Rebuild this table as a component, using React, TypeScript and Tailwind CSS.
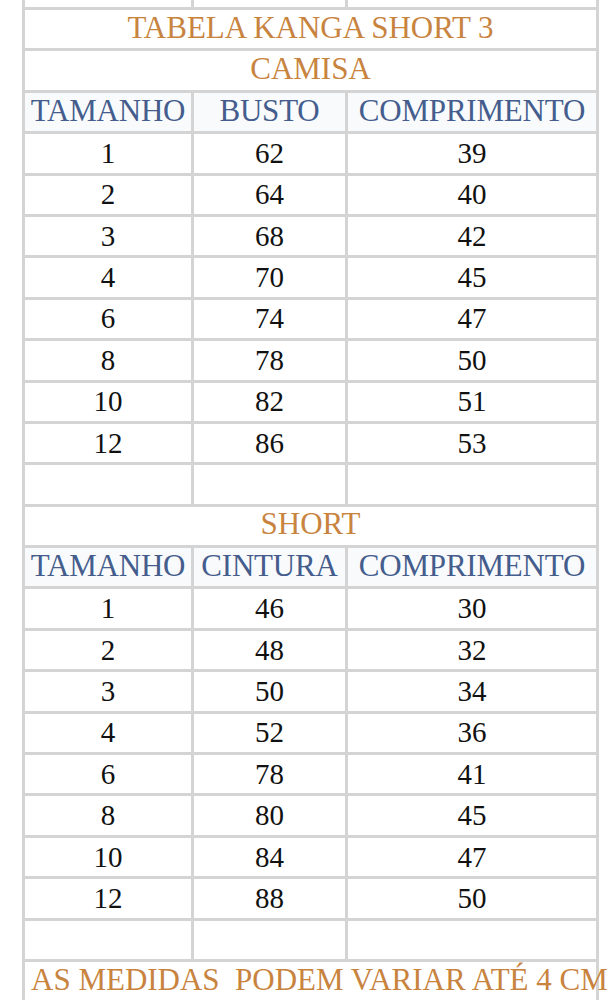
const camisa = [
  ["1", "62", "39"],
  ["2", "64", "40"],
  ["3", "68", "42"],
  ["4", "70", "45"],
  ["6", "74", "47"],
  ["8", "78", "50"],
  ["10", "82", "51"],
  ["12", "86", "53"],
];

const short = [
  ["1", "46", "30"],
  ["2", "48", "32"],
  ["3", "50", "34"],
  ["4", "52", "36"],
  ["6", "78", "41"],
  ["8", "80", "45"],
  ["10", "84", "47"],
  ["12", "88", "50"],
];

const Title = ({ children }: { children: React.ReactNode }) => (
  <div className="col-span-3 flex h-[38.4px] items-center justify-center bg-white pb-[4px] text-[31px] text-[#c8843f]">
    {children}
  </div>
);

const Header = ({ cols }: { cols: string[] }) => (
  <>
    {cols.map((c, i) => (
      <div
        key={i}
        className="flex h-[38.4px] items-center justify-center bg-[#f8fafc] pb-[3px] text-[31px] tracking-[-0.2px] text-[#445d8d]"
      >
        {c}
      </div>
    ))}
  </>
);

const Rows = ({ data }: { data: string[][] }) => (
  <>
    {data.map((row) =>
      row.map((v, i) => (
        <div
          key={row[0] + "-" + i}
          className="flex h-[38.4px] items-center justify-center bg-white text-[29px] text-[#111]"
        >
          {v}
        </div>
      ))
    )}
  </>
);

const Empty = () => (
  <>
    <div className="h-[38.4px] bg-white" />
    <div className="h-[38.4px] bg-white" />
    <div className="h-[38.4px] bg-white" />
  </>
);

export default function App() {
  return (
    <div className="h-[1000px] w-[611px] overflow-hidden bg-white" style={{ fontFamily: '"Liberation Serif", "Times New Roman", serif' }}>
      <div className="ml-[22px] grid w-[577px] grid-cols-[166px_151px_248px] gap-[3px] bg-[#d4d4d4] px-[3px] leading-none">
        <div className="h-[7px] bg-white" />
        <div className="h-[7px] bg-white" />
        <div className="h-[7px] bg-white" />

        <Title>TABELA KANGA SHORT 3</Title>
        <Title>CAMISA</Title>
        <Header cols={["TAMANHO", "BUSTO", "COMPRIMENTO"]} />
        <Rows data={camisa} />
        <Empty />

        <Title>SHORT</Title>
        <Header cols={["TAMANHO", "CINTURA", "COMPRIMENTO"]} />
        <Rows data={short} />
        <Empty />

        <div className="col-span-3 flex h-[38.4px] items-center overflow-visible whitespace-pre bg-white pb-[3px] pl-[6px] text-[31px] text-[#c8843f]">
          AS MEDIDAS  PODEM VARIAR ATÉ 4 CM
        </div>
      </div>
    </div>
  );
}
